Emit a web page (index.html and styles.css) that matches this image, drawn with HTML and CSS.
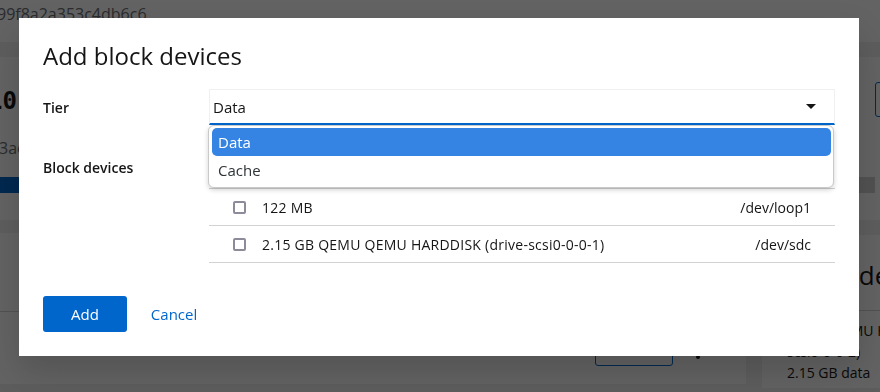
FILE: index.html
```html
<!DOCTYPE html>
<html lang="en">
<head>
<meta charset="utf-8">
<title>Add block devices</title>
<link rel="stylesheet" href="styles.css">
</head>
<body>
<div class="page">
  <header class="topbar"><span class="uuid">99f8a2a353c4db6c6</span></header>
  <main class="content">
    <section class="card pool-card">
      <div class="pool-info">
        <div class="pool-size">10</div>
        <div class="pool-id">3ac</div>
        <div class="usage"><div class="usage-fill" style="width: 45%"></div></div>
      </div>
      <div class="pool-actions"><button class="btn-outline">Rename</button></div>
    </section>
    <div class="cards-row">
      <section class="card list-card">
        <div class="list-card-head"></div>
        <div class="list-card-actions">
          <button class="btn-outline btn-small">Add</button>
          <svg class="kebab" width="4" height="16" viewBox="0 0 4 16"><circle cx="2" cy="2" r="2"/><circle cx="2" cy="8" r="2"/><circle cx="2" cy="14" r="2"/></svg>
        </div>
      </section>
      <section class="card dev-card">
        <h2 class="dev-card-title">Block devices</h2>
        <div class="dev-card-body">
          <div>QEMU QEMU HARDDISK (drive-</div>
          <div>scsi0-0-0-2)</div>
          <div>2.15 GB data</div>
        </div>
      </section>
    </div>
  </main>
</div>

<div class="backdrop"></div>

<div class="modal" role="dialog" aria-labelledby="modal-title">
  <h1 class="modal-title" id="modal-title">Add block devices</h1>
  <div class="form">
    <div class="form-row">
      <label class="form-label">Tier</label>
      <div class="select-wrap">
        <div class="select">
          <span>Data</span>
          <svg class="caret" width="10" height="5" viewBox="0 0 10 5"><polygon points="0,0 10,0 5,5"/></svg>
        </div>
        <ul class="select-menu">
          <li class="option selected">Data</li>
          <li class="option">Cache</li>
        </ul>
      </div>
    </div>
    <div class="form-row">
      <label class="form-label label-top">Block devices</label>
      <ul class="device-list">
        <li class="device"><span class="checkbox"></span><span class="dev-name">122 MB</span><span class="dev-path">/dev/loop0</span></li>
        <li class="device"><span class="checkbox"></span><span class="dev-name">122 MB</span><span class="dev-path">/dev/loop1</span></li>
        <li class="device"><span class="checkbox"></span><span class="dev-name">2.15 GB QEMU QEMU HARDDISK (drive-scsi0-0-0-1)</span><span class="dev-path">/dev/sdc</span></li>
      </ul>
    </div>
  </div>
  <div class="modal-footer">
    <button class="btn-primary">Add</button>
    <button class="btn-link">Cancel</button>
  </div>
</div>
</body>
</html>
```

FILE: styles.css
```css
* { box-sizing: border-box; }

html, body {
  margin: 0;
  padding: 0;
}

body {
  font-family: "Open Sans", "Liberation Sans", sans-serif;
  color: #151515;
  background: #f0f0f0;
  width: 880px;
  height: 392px;
  overflow: hidden;
}

/* ---------- background page ---------- */
.page {
  width: 880px;
  height: 392px;
  overflow: hidden;
  background: #f0f0f0;
}

.topbar {
  height: 42px;
  background: #ffffff;
  padding-top: 4px;
}

.uuid {
  display: block;
  margin-left: -3px;
  font-size: 16px;
  line-height: 20px;
  color: #6a6e73;
  white-space: nowrap;
}

.content {
  padding-top: 15px;
}

.card {
  background: #ffffff;
}

.pool-card {
  display: flex;
  height: 163px;
}

.pool-info {
  flex: 1;
  padding-top: 30px;
}

.pool-size {
  margin-left: -12px;
  font-family: "DejaVu Sans Mono", monospace;
  font-weight: 700;
  font-size: 24px;
  line-height: 28px;
}

.pool-id {
  margin-top: 23px;
  margin-left: -1px;
  font-size: 16px;
  line-height: 20px;
  color: #6a6e73;
}

.usage {
  margin-top: 19px;
  height: 16px;
  background: #d2d2d2;
}

.usage-fill {
  height: 100%;
  background: #0066cc;
}

.pool-actions {
  width: 5px;
  padding-top: 25px;
}

.btn-outline {
  height: 35px;
  padding: 0 16px;
  border: 1px solid #0066cc;
  border-radius: 3px;
  background: #ffffff;
  color: #0066cc;
  font-family: inherit;
  font-size: 15px;
  white-space: nowrap;
}

.btn-small {
  width: 78px;
  height: 36px;
}

.cards-row {
  display: flex;
  gap: 16px;
  margin-top: 13px;
}

.list-card {
  flex: none;
  width: 746px;
  height: 151px;
  display: flex;
  flex-direction: column;
}

.list-card-head {
  height: 79px;
  border-bottom: 1px solid #d2d2d2;
}

.list-card-actions {
  display: flex;
  justify-content: flex-end;
  align-items: center;
  gap: 23px;
  padding: 18px 46px 0 0;
}

.kebab {
  fill: #151515;
  margin-top: 6px;
}

.dev-card {
  flex: none;
  width: 300px;
  height: 153px;
  margin-top: 2px;
}

.dev-card-title {
  margin: 23px 0 0;
  padding: 0 0 18px 25px;
  font-size: 26px;
  line-height: 34px;
  font-weight: 400;
  white-space: nowrap;
  border-bottom: 1px solid #d2d2d2;
}

.dev-card-body {
  padding: 9px 0 0 25px;
  font-size: 14px;
  line-height: 21px;
  white-space: nowrap;
}

/* ---------- backdrop ---------- */
.backdrop {
  position: fixed;
  inset: 0;
  background: rgba(3, 3, 3, 0.62);
}

/* ---------- modal ---------- */
.modal {
  position: fixed;
  left: 19px;
  top: 18px;
  width: 840px;
  background: #ffffff;
  padding: 22px 24px 24px 24px;
  box-shadow: 0 16px 32px rgba(0, 0, 0, 0.16);
}

.modal-title {
  margin: 0;
  font-size: 24px;
  line-height: 31px;
  font-weight: 400;
  color: #151515;
}

.form {
  margin-top: 18px;
  display: flex;
  flex-direction: column;
  gap: 24px;
}

.form-row {
  display: grid;
  grid-template-columns: 166px 1fr;
  align-items: center;
}

.form-label {
  font-size: 14px;
  line-height: 21px;
  font-weight: 600;
}

.label-top {
  align-self: start;
  padding-top: 8px;
}

.select-wrap {
  position: relative;
}

.select {
  height: 36px;
  display: flex;
  align-items: center;
  justify-content: space-between;
  padding: 0 18px 0 3px;
  border: 1px solid #f0f0f0;
  border-bottom: 2px solid #0066cc;
  font-size: 15px;
  line-height: 20px;
}

.caret {
  fill: #151515;
}

.select-menu {
  position: absolute;
  top: 100%;
  left: -1px;
  right: 1px;
  margin: 0;
  padding: 2px 2px 3px 3px;
  list-style: none;
  background: #ffffff;
  border: 1px solid #c9c9c9;
  border-radius: 6px;
  box-shadow: 0 2px 5px rgba(0, 0, 0, 0.18);
  z-index: 2;
}

.option {
  height: 28px;
  display: flex;
  align-items: center;
  padding-left: 6px;
  font-size: 15px;
  color: #2e3436;
  border-radius: 5px;
}

.option.selected {
  background: #3584e4;
  color: #ffffff;
}

.device-list {
  margin: 0;
  padding: 3px 0 0;
  list-style: none;
}

.device {
  height: 37px;
  display: flex;
  align-items: center;
  padding: 0 24px;
  border-bottom: 1px solid #d2d2d2;
  font-size: 14px;
}

.checkbox {
  width: 13px;
  height: 13px;
  border: 2px solid #8d8b9a;
  border-radius: 2px;
  flex: none;
}

.dev-name {
  margin-left: 16px;
  letter-spacing: 0.25px;
}

.dev-path {
  margin-left: auto;
}

.modal-footer {
  margin-top: 33px;
  display: flex;
  align-items: center;
}

.btn-primary {
  height: 36px;
  padding: 0 28px;
  border: none;
  border-radius: 3px;
  background: #0066cc;
  color: #ffffff;
  font-family: inherit;
  font-size: 15px;
}

.btn-link {
  height: 36px;
  margin-left: 8px;
  padding: 0 16px;
  border: none;
  background: none;
  color: #0066cc;
  font-family: inherit;
  font-size: 15px;
}
```
